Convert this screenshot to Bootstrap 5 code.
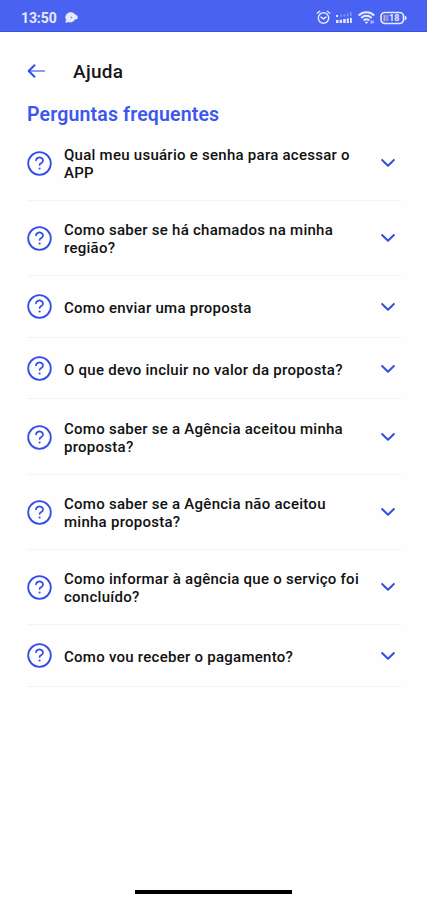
<!DOCTYPE html>
<html lang="pt-BR">
<head>
<meta charset="utf-8">
<meta name="viewport" content="width=device-width, initial-scale=1">
<title>Ajuda</title>
<link href="https://cdn.jsdelivr.net/npm/bootstrap@5.3.0/dist/css/bootstrap.min.css" rel="stylesheet">
<style>
  body { font-family: Roboto, "Liberation Sans", sans-serif; background: #fefefe; color: #17171a; }
  .screen { height: 900px; overflow: hidden; }
  .status { height: 32px; background: #4a62f2; border-bottom: 1px solid #3b50dc; padding: 4px 19px 0 21px; color: #e6eaff; }
  .clock { font-size: 14px; font-weight: 700; line-height: 20px; letter-spacing: -.1px; }
  .topbar { height: 67px; padding: 28px 27px 0; }
  .back { margin-top: 1px; }
  .topbar h1 { font-size: 19px; font-weight: 500; line-height: 24px; margin-left: 26px; letter-spacing: .3px; }
  .section-title { font-size: 19.5px; font-weight: 600; line-height: 24px; height: 22.5px; color: #3d57ee; padding-left: 27px; letter-spacing: .16px; margin-top: 4px; }
  .faq { margin: 0 25px 0 27px; }
  .faq-item { height: 75.2px; padding: 1px 6px 0 0; border-bottom: 1px solid #f3f3f4; background: none; }
  .faq-item.one-line { height: 61.8px; }
  .question { font-size: 15px; font-weight: 500; line-height: 18px; margin-left: 12px; letter-spacing: .26px; color: #111; padding-top: 2px; }
  .blue { color: #334de6; }
  .homebar { width: 157px; height: 4px; background: #000; margin-bottom: 6.5px; }
</style>
</head>
<body>
<svg class="d-none" xmlns="http://www.w3.org/2000/svg">
  <symbol id="help" viewBox="0 0 25 25"><g fill="none" stroke="currentColor" stroke-linecap="round"><circle cx="12.5" cy="12.5" r="11.3" stroke-width="1.8"/><path d="M9 9.4a3.5 3 0 1 1 5.4 2.6c-1.3.8-1.8 1.1-1.8 2" stroke-width="1.7"/></g><circle cx="12.6" cy="17.5" r="1.1" fill="currentColor"/></symbol>
  <symbol id="down" viewBox="0 0 16 10"><path d="M2.1 2 8 7.7l5.9-5.7" fill="none" stroke="currentColor" stroke-width="2" stroke-linecap="round" stroke-linejoin="round"/></symbol>
</svg>
<div class="screen d-flex flex-column">
  <header class="status d-flex align-items-center flex-shrink-0">
    <span class="clock">13:50</span>
    <svg style="" class="ms-2" width="13" height="12" viewBox="0 0 13 12"><path d="M1 11 .4 9.6 1.3 8A5 4.6 0 0 1 10 2.3L12.6 4v3L10 7.5A5 4.6 0 0 1 3.2 10z" fill="currentColor"/><circle cx="6.3" cy="5.5" r="1" fill="#8b9af5"/></svg>
    <div class="ms-auto d-flex align-items-center">
      <svg width="15" height="15" viewBox="0 0 15 15" fill="none" stroke="currentColor" stroke-width="1.4" stroke-linecap="round"><circle cx="7.5" cy="8" r="5.2"/><path d="M1.2 3.2 3.7 1.3M13.8 3.2l-2.5-1.9M5 7.2l2.5 1.7L10 7.2"/></svg>
      <svg class="ms-1" width="19" height="13" viewBox="0 0 19 13" fill="currentColor"><path d="M1 9h2.5v3H1zM4.6 8.8h2.5V12H4.6zM8.2 8h2.5v4H8.2zM11.8 7.4h2V12h-2zM15 6.8h1.8V12H15zM1 4h2v2H1z"/><path opacity=".35" d="M5 3.8h1.7v2H5zM8.4 3.2h1.7v2.6H8.4zM11.9 2.5h1.7v3h-1.7zM15 1h1.7v4H15z"/></svg>
      <svg class="ms-1" width="18" height="14" viewBox="0 0 18 14" fill="none" stroke="currentColor" stroke-width="2"><path d="M.7 4.5a11 11 0 0 1 15.5 0M3.2 7a7.5 7.5 0 0 1 10.5 0M5.7 9.4a4 4 0 0 1 5.5 0"/><path d="M8.5 13 6.6 10.8h3.8z" fill="currentColor" stroke="none"/><path d="M13.2 9.5v3M15 9.5v3" stroke-width="1"/></svg>
      <svg class="ms-1" width="28" height="14" viewBox="0 0 28 14"><rect x="1" y="1.5" width="22.5" height="11" rx="4" fill="none" stroke="currentColor" stroke-width="1.7"/><path d="M24.8 4.5c2.4.7 2.4 4.3 0 5z" fill="currentColor"/><path d="M3.5 4h2v6h-2z" fill="#d9a6b8"/><path d="M6 4h2.5v6H6z" fill="currentColor" opacity=".35"/><text x="9" y="10.3" font-size="9" font-weight="700" fill="currentColor">18</text></svg>
    </div>
  </header>
  <nav class="topbar d-flex align-items-start flex-shrink-0">
    <svg class="blue back" width="20" height="20" viewBox="0 0 20 20" fill="none" stroke="currentColor" stroke-linecap="round" stroke-linejoin="round"><path d="M7.5 4.3 1.7 10l5.8 5.7" stroke-width="2"/><path d="M2 10h15.4" stroke-width="1.6" stroke-opacity=".75"/></svg>
    <h1 class="mb-0">Ajuda</h1>
  </nav>
  <h2 class="section-title mb-0 flex-shrink-0">Perguntas frequentes</h2>
  <main class="faq">
    <div class="faq-item d-flex align-items-center"><svg class="blue flex-shrink-0" width="25" height="25"><use href="#help"/></svg><span class="question text-nowrap">Qual meu usuário e senha para acessar o<br>APP</span><svg class="blue ms-auto" width="16" height="10"><use href="#down"/></svg></div>
    <div class="faq-item d-flex align-items-center"><svg class="blue flex-shrink-0" width="25" height="25"><use href="#help"/></svg><span class="question text-nowrap">Como saber se há chamados na minha<br>região?</span><svg class="blue ms-auto" width="16" height="10"><use href="#down"/></svg></div>
    <div class="faq-item one-line d-flex align-items-center"><svg class="blue flex-shrink-0" width="25" height="25"><use href="#help"/></svg><span class="question text-nowrap">Como enviar uma proposta</span><svg class="blue ms-auto" width="16" height="10"><use href="#down"/></svg></div>
    <div class="faq-item one-line d-flex align-items-center"><svg class="blue flex-shrink-0" width="25" height="25"><use href="#help"/></svg><span class="question text-nowrap">O que devo incluir no valor da proposta?</span><svg class="blue ms-auto" width="16" height="10"><use href="#down"/></svg></div>
    <div class="faq-item d-flex align-items-center"><svg class="blue flex-shrink-0" width="25" height="25"><use href="#help"/></svg><span class="question text-nowrap">Como saber se a Agência aceitou minha<br>proposta?</span><svg class="blue ms-auto" width="16" height="10"><use href="#down"/></svg></div>
    <div class="faq-item d-flex align-items-center"><svg class="blue flex-shrink-0" width="25" height="25"><use href="#help"/></svg><span class="question text-nowrap">Como saber se a Agência não aceitou<br>minha proposta?</span><svg class="blue ms-auto" width="16" height="10"><use href="#down"/></svg></div>
    <div class="faq-item d-flex align-items-center"><svg class="blue flex-shrink-0" width="25" height="25"><use href="#help"/></svg><span class="question text-nowrap">Como informar à agência que o serviço foi<br>concluído?</span><svg class="blue ms-auto" width="16" height="10"><use href="#down"/></svg></div>
    <div class="faq-item one-line d-flex align-items-center"><svg class="blue flex-shrink-0" width="25" height="25"><use href="#help"/></svg><span class="question text-nowrap">Como vou receber o pagamento?</span><svg class="blue ms-auto" width="16" height="10"><use href="#down"/></svg></div>
  </main>
  <div class="homebar mt-auto mx-auto flex-shrink-0"></div>
</div>
<script src="https://cdn.jsdelivr.net/npm/bootstrap@5.3.0/dist/js/bootstrap.bundle.min.js"></script>
</body>
</html>
